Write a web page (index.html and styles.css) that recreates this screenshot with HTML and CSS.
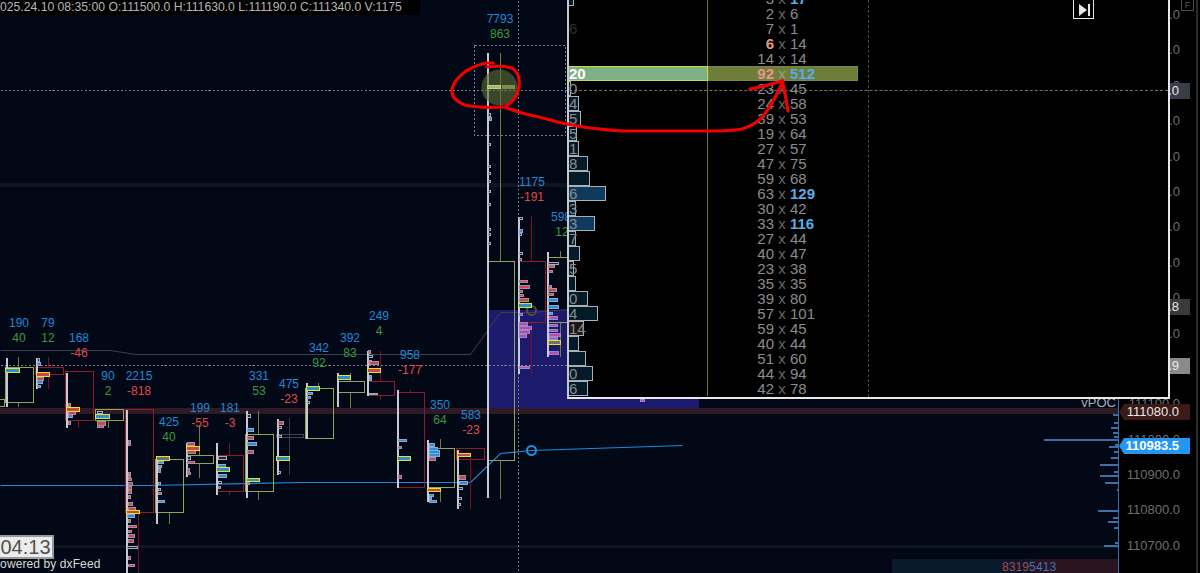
FILE: index.html
```html
<!DOCTYPE html>
<html lang="en">
<head>
<meta charset="utf-8">
<title>Footprint chart</title>
<link rel="stylesheet" href="styles.css">
</head>
<body>
<div class="stage">
  <main class="chart">
    <svg class="plot" width="1118" height="573" viewBox="0 0 1118 573">
      <rect class="band-gray" x="0" y="183" width="568" height="4"/>
      <rect class="band-gray" x="0" y="545" width="1118" height="3"/>
      <rect class="area" x="487" y="310" width="212" height="102"/>
      <rect class="band-red" x="0" y="408" width="1118" height="6"/>
      <rect class="foot-blue" x="892" y="559" width="138" height="14"/>
      <rect class="foot-red" x="1030" y="559" width="88" height="14"/>
      <g transform="translate(.5 .5)">
        <path class="dots" d="M0 90H568M0 365H568M518 0V573M474 45h91v90h-91z"/>
        <path class="vwap-gray" d="M0 350H110L135 354H470L500 312H531L568 309"/>
        <path class="vwap-blue" d="M0 485L150 485 300 482 380 482H470L500 453 531 450 682 445"/>
        <circle class="dot-gray" cx="531" cy="310" r="4.5"/>
        <circle class="dot-blue" cx="531" cy="450" r="4.5"/>
        <path class="wick-g" d="M18 356V367M18 402V406M108 420V427M169 512V523M199 424V455M199 463V477M258 410V434M258 491V499M318 382V388M350 372V381M350 392V407M440 438V448M440 487V501M500 52V261M500 460V498M560 250V257M560 322V356"/>
        <path class="wick-r" d="M48 356V367M48 374V388M78 420V427M138 512V573M229 442V455M229 491V494M380 350V381M380 395V399M410 389V392M470 459V508M531 215V261M531 322V373"/>
        <path class="wick-k" d="M289 417V474"/>
        <path class="box-k" d="M276 434h27v3h-27z"/>
        <path class="box-g" d="M5 367h28v35h-28zM95 409h28v11h-28zM155 459h28v53h-28zM186 455h27v8h-27zM245 434h28v57h-28zM305 388h28v50h-28zM337 381h27v11h-27zM427 448h27v39h-27zM487 261h27v199h-27zM547 257h21v65h-21zM-2 399h6v7h-6z"/>
        <path class="box-r" d="M35 367h28v7h-28zM65 371h28v49h-28zM125 409h28v103h-28zM216 455h27v36h-27zM367 381h27v14h-27zM397 392h27v95h-27zM456 448h28v11h-28zM518 261h27v61h-27z"/>
        <path class="spine" d="M6 357V406M36 357V388M66 372V427M126 409V573M156 456V523M186 442V476M216 442V494M246 410V497M277 418V474M306 382V438M337 372V406M367 350V395M397 389V487M427 439V501M457 449V508M487 52V497M518 216V373M547 251V356"/>
        <path class="bar-k" d="M37 358h2v3h-2zM97 411h5v2h-5zM218 456h8v3h-8zM218 481h3v2h-3zM247 414h3v3h-3zM278 426h3v2h-3zM278 435h3v2h-3zM278 471h2v2h-2zM187 456h3v3h-3zM158 482h2v2h-2zM158 488h2v2h-2zM127 546h10v2h-10zM368 355h4v2h-4zM368 360h3v2h-3zM458 487h4v2h-4zM458 497h3v2h-3zM458 503h2v2h-2zM488 113h2v3h-2zM488 143h2v2h-2zM488 165h2v2h-2zM488 172h2v2h-2zM488 180h2v2h-2zM488 190h2v2h-2zM488 203h2v2h-2zM488 228h2v2h-2zM488 233h2v2h-2zM488 242h2v2h-2zM519 217h3v2h-3zM519 233h2v2h-2zM519 252h3v2h-3zM519 258h2v2h-2zM548 262h10v2h-10zM458 475h3v2h-3zM307 401h2v2h-2z"/>
        <path class="bar-b" d="M37 362h3v3h-3zM37 380h5v3h-5zM37 385h3v2h-3zM68 414h4v3h-4zM127 514h7v3h-7zM158 461h5v2h-5zM158 465h3v2h-3zM158 468h2v2h-2zM158 500h6v2h-6zM218 464h7v3h-7zM218 474h8v3h-8zM247 428h6v3h-6zM247 442h9v3h-9zM307 392h5v2h-5zM307 396h3v2h-3zM369 375h2v2h-2zM369 378h2v2h-2zM369 393h8v1h-8zM398 439h8v2h-8zM429 443h5v3h-5zM429 447h8v3h-8zM429 450h10v3h-10zM429 453h10v3h-10zM429 494h4v2h-4zM429 497h2v2h-2zM429 500h7v2h-7zM459 481h8v3h-8zM489 117h2v3h-2zM519 229h3v3h-3zM548 298h9v3h-9zM548 305h10v3h-10zM549 312h3v2h-3z"/>
        <path class="bar-r" d="M37 377h6v3h-6zM68 403h2v3h-2zM68 411h7v3h-7zM68 421h2v3h-2zM97 421h8v4h-8zM97 425h6v2h-6zM128 440h2v2h-2zM128 443h2v2h-2zM128 472h2v2h-2zM128 475h2v2h-2zM128 478h3v2h-3zM128 482h4v3h-4zM128 486h3v3h-3zM128 490h3v3h-3zM128 495h2v3h-2zM128 502h4v3h-4zM128 507h7v3h-7zM128 519h2v3h-2zM128 525h8v2h-8zM128 530h3v2h-3zM128 534h6v3h-6zM128 539h5v3h-5zM128 556h2v3h-2zM128 564h6v2h-6zM158 470h2v2h-2zM158 492h3v2h-3zM187 442h7v3h-7zM187 450h8v3h-8zM187 461h7v2h-7zM187 468h2v3h-2zM187 472h3v2h-3zM218 486h2v2h-2zM247 436h6v3h-6zM247 450h6v3h-6zM247 482h2v2h-2zM278 421h5v3h-5zM368 350h2v3h-2zM369 361h9v3h-9zM398 446h3v2h-3zM398 475h3v3h-3zM429 457h6v3h-6zM459 475h6v4h-6zM519 290h3v2h-3zM519 294h4v2h-4zM519 298h9v3h-9zM519 285h10v3h-10zM519 280h8v2h-8zM548 265h6v2h-6zM548 270h4v2h-4zM548 285h3v2h-3zM548 288h8v3h-8zM548 293h5v2h-5z"/>
        <path class="bar-p" d="M519 313h3v2h-3zM519 322h8v3h-8zM519 326h12v3h-12zM519 330h10v3h-10zM519 334h7v3h-7zM519 366h10v2h-10zM549 316h8v3h-8zM549 324h8v2h-8zM549 329h8v2h-8zM549 333h11v3h-11zM549 337h8v2h-8zM549 351h9v3h-9zM640 399h4v2h-4z"/>
        <path class="poc-b" d="M5 368h14v4h-14zM95 414h14v4h-14zM216 467h13v4h-13zM246 478h13v3h-13zM276 456h13v4h-13zM306 386h13v4h-13zM337 375h13v4h-13zM397 456h13v4h-13zM518 303h13v4h-13z"/>
        <path class="poc-r" d="M36 372h13v4h-13zM66 407h13v4h-13zM126 510h13v3h-13zM186 446h13v4h-13zM367 368h13v4h-13zM427 488h13v3h-13zM457 453h13v3h-13z"/>
        <path class="poc-o" d="M156 456h13v4h-13zM548 340h12v4h-12z"/>
        <circle class="halo" cx="499" cy="87" r="18"/>
        <path class="poc-light" d="M487 85h13v3h-13z"/>
        <path class="poc-olive" d="M502 85h12v3h-12z"/>
        <path class="prof-axis" d="M1118 400V573"/>
        <path class="prof" d="M1112 414h6M1113 422h5M1110 427h8M1112 432h6M1113 436h5M1043 439h75M1114 444h4M1108 446h10M1113 451h5M1110 457h8M1099 464h19M1113 471h5M1099 475h19M1104 482h14M1116 489h2M1097 510h21M1112 517h6M1107 521h11M1113 527h5M1114 542h4M1103 545h15"/>
      </g>
      <g class="vol">
        <text x="19" y="327">190</text><text x="48" y="327">79</text><text x="79" y="342">168</text><text x="108" y="380">90</text><text x="139" y="380">2215</text><text x="169" y="426">425</text><text x="200" y="412">199</text><text x="230" y="412">181</text><text x="259" y="380">331</text><text x="289" y="388">475</text><text x="319" y="352">342</text><text x="350" y="342">392</text><text x="379" y="320">249</text><text x="410" y="359">958</text><text x="440" y="409">350</text><text x="471" y="419">583</text><text x="500" y="23">7793</text><text x="532" y="186">1175</text><text x="561" y="221">598</text>
      </g>
      <g class="up">
        <text x="19" y="342">40</text><text x="48" y="342">12</text><text x="108" y="395">2</text><text x="169" y="441">40</text><text x="259" y="395">53</text><text x="319" y="367">92</text><text x="350" y="357">83</text><text x="379" y="335">4</text><text x="440" y="424">64</text><text x="500" y="38">863</text><text x="562" y="236">12</text>
      </g>
      <g class="down">
        <text x="79" y="357">-46</text><text x="139" y="395">-818</text><text x="200" y="427">-55</text><text x="230" y="427">-3</text><text x="289" y="403">-23</text><text x="410" y="374">-177</text><text x="471" y="434">-23</text><text x="532" y="201">-191</text>
      </g>
      <text class="vpoc" x="1116" y="407">vPOC</text>
      <text class="foot-num" x="1002" y="571"><tspan class="foot-a">8319</tspan><tspan class="foot-b">5413</tspan></text>
    </svg>
    <header class="ohlc"><span class="ohlc-text">2025.24.10 08:35:00 O:111500.0 H:111630.0 L:111190.0 C:111340.0 V:1175</span></header>
    <div class="timer">04:13</div>
    <div class="powered">Powered by dxFeed</div>
  </main>
  <aside class="axis">
    <div class="tick">112200.0</div><div class="tick">112100.0</div><div class="tick">112000.0</div><div class="tick">111900.0</div><div class="tick">111800.0</div><div class="tick">111700.0</div><div class="tick">111600.0</div><div class="tick">111500.0</div><div class="tick">111400.0</div><div class="tick">111300.0</div><div class="tick">111200.0</div><div class="tick">111100.0</div><div class="tick">111000.0</div><div class="tick">110900.0</div><div class="tick">110800.0</div><div class="tick">110700.0</div>
    <div class="tag tag-cross">.0</div>
    <div class="tag tag-dark">.8</div>
    <div class="tag tag-mid">.9</div>
    <div class="tag tag-brown">111080.0</div>
    <div class="tag tag-blue">110983.5</div>
    <div class="fbox">F</div>
  </aside>
  <section class="dom">
    <div class="rows">
      <div class="row"><div class="hist"><span class="bar" style="width:5px"></span></div><div class="cells"><span class="l">3</span><span class="x">x</span><span class="r big">17</span></div></div>
      <div class="row"><div class="hist"></div><div class="cells"><span class="l">2</span><span class="x">x</span><span class="r">6</span></div></div>
      <div class="row"><div class="hist"><span class="faint">6</span></div><div class="cells"><span class="l">7</span><span class="x">x</span><span class="r">1</span></div></div>
      <div class="row"><div class="hist"></div><div class="cells"><span class="l hot">6</span><span class="x">x</span><span class="r">14</span></div></div>
      <div class="row"><div class="hist"></div><div class="cells"><span class="l">14</span><span class="x">x</span><span class="r">14</span></div></div>
      <div class="row poc"><div class="hist"><span class="poc-n">20</span></div><div class="cells"><span class="l hot">92</span><span class="x">x</span><span class="r big">512</span></div></div>
      <div class="row"><div class="hist"><span class="bar" style="width:2px">0</span></div><div class="cells"><span class="l">23</span><span class="x">x</span><span class="r">45</span></div></div>
      <div class="row"><div class="hist"><span class="bar" style="width:10px">4</span></div><div class="cells"><span class="l">24</span><span class="x">x</span><span class="r">58</span></div></div>
      <div class="row"><div class="hist"><span class="bar" style="width:12px">5</span></div><div class="cells"><span class="l">39</span><span class="x">x</span><span class="r">53</span></div></div>
      <div class="row"><div class="hist"><span class="bar" style="width:8px">5</span></div><div class="cells"><span class="l">19</span><span class="x">x</span><span class="r">64</span></div></div>
      <div class="row"><div class="hist"><span class="bar" style="width:10px">1</span></div><div class="cells"><span class="l">27</span><span class="x">x</span><span class="r">57</span></div></div>
      <div class="row"><div class="hist"><span class="bar" style="width:19px">8</span></div><div class="cells"><span class="l">47</span><span class="x">x</span><span class="r">75</span></div></div>
      <div class="row"><div class="hist"><span class="bar" style="width:21px"></span></div><div class="cells"><span class="l">59</span><span class="x">x</span><span class="r">68</span></div></div>
      <div class="row"><div class="hist"><span class="bar bright" style="width:37px">6</span></div><div class="cells"><span class="l">63</span><span class="x">x</span><span class="r big">129</span></div></div>
      <div class="row"><div class="hist"><span class="bar" style="width:7px">3</span></div><div class="cells"><span class="l">30</span><span class="x">x</span><span class="r">42</span></div></div>
      <div class="row"><div class="hist"><span class="bar bright" style="width:26px">3</span></div><div class="cells"><span class="l">33</span><span class="x">x</span><span class="r big">116</span></div></div>
      <div class="row"><div class="hist"><span class="bar" style="width:7px">7</span></div><div class="cells"><span class="l">27</span><span class="x">x</span><span class="r">44</span></div></div>
      <div class="row"><div class="hist"><span class="bar" style="width:11px"></span></div><div class="cells"><span class="l">40</span><span class="x">x</span><span class="r">47</span></div></div>
      <div class="row"><div class="hist"><span class="bar" style="width:5px">5</span></div><div class="cells"><span class="l">23</span><span class="x">x</span><span class="r">38</span></div></div>
      <div class="row"><div class="hist"><span class="bar" style="width:7px"></span></div><div class="cells"><span class="l">35</span><span class="x">x</span><span class="r">35</span></div></div>
      <div class="row"><div class="hist"><span class="bar" style="width:19px">0</span></div><div class="cells"><span class="l">39</span><span class="x">x</span><span class="r">80</span></div></div>
      <div class="row"><div class="hist"><span class="bar" style="width:29px">4</span></div><div class="cells"><span class="l">57</span><span class="x">x</span><span class="r">101</span></div></div>
      <div class="row"><div class="hist"><span class="bar brown" style="width:15px">14</span></div><div class="cells"><span class="l">59</span><span class="x">x</span><span class="r">45</span></div></div>
      <div class="row"><div class="hist"><span class="bar" style="width:10px"></span></div><div class="cells"><span class="l">40</span><span class="x">x</span><span class="r">44</span></div></div>
      <div class="row"><div class="hist"><span class="bar" style="width:17px"></span></div><div class="cells"><span class="l">51</span><span class="x">x</span><span class="r">60</span></div></div>
      <div class="row"><div class="hist"><span class="bar" style="width:24px">0</span></div><div class="cells"><span class="l">44</span><span class="x">x</span><span class="r">94</span></div></div>
      <div class="row"><div class="hist"><span class="bar" style="width:19px">6</span></div><div class="cells"><span class="l">42</span><span class="x">x</span><span class="r">78</span></div></div>
    </div>
    <div class="next"><svg width="19" height="19" viewBox="0 0 19 19"><path class="next-icon" d="M5 4L13 10 5 16zM14 4h2v12h-2z"/></svg></div>
  </section>
  <svg class="ink" width="1200" height="573" viewBox="0 0 1200 573">
    <path d="M493 63L487 63C480 64 473 67 466 71C458 77 452 84 452 91C452 98 457 102 465 105C473 107 490 108 503 107"/>
    <path d="M487 67C495 66 505 66 512 68C518 72 520 79 519 86C518 94 514 100 510 103C507 105 505 107 505 107C512 110 520 113 530 115C545 118 556 122 567 124C585 128 605 130 623 131C650 131 690 131 707 131C720 131 733 131 742 129C752 126 758 122 763 116C770 108 775 98 779 90C781 85 782 82 783 81"/>
    <path d="M750 89C762 87 772 84 782 81C785 90 786 100 788 111"/>
  </svg>
</div>
</body>
</html>
```
FILE: styles.css
```css
* { box-sizing: border-box; }
html, body { margin: 0; padding: 0; background: #020816; }
.stage {
  position: relative;
  display: flex;
  width: 1200px;
  height: 573px;
  overflow: hidden;
  font-family: "Liberation Sans", Arial, sans-serif;
}
.chart { position: relative; width: 1118px; height: 573px; background: #020816; flex: none; }
.plot { display: block; shape-rendering: crispEdges; }
.plot text { font-size: 12px; text-anchor: middle; }

.band-gray { fill: #10151f; }
.band-red { fill: #2e1a24; }
.area { fill: #1c1a6c; }
.foot-blue { fill: #0a1a2c; }
.foot-red { fill: #2a1420; }

.dots { fill: none; stroke: #7d8088; stroke-width: 1; stroke-dasharray: 2 2; }
.vwap-gray { fill: none; stroke: #3c404c; shape-rendering: geometricPrecision; }
.vwap-blue { fill: none; stroke: #2088dc; stroke-width: 1.2; shape-rendering: geometricPrecision; }
.dot-gray { fill: none; stroke: #4e4c40; stroke-width: 2; shape-rendering: geometricPrecision; }
.dot-blue { fill: none; stroke: #2090e0; stroke-width: 2; shape-rendering: geometricPrecision; }
.wick-g { fill: none; stroke: #6e8040; }
.wick-r { fill: none; stroke: #7e121c; }
.wick-k { fill: none; stroke: #383c44; }
.box-k { fill: none; stroke: #40444c; }
.box-g { fill: none; stroke: #8fa658; }
.box-r { fill: none; stroke: #921a26; }
.spine { fill: none; stroke: #c6cad6; stroke-width: 2; }
.bar-k { fill: #20242e; stroke: #a8acb8; }
.bar-b { fill: #2a8ee0; stroke: #8ea8c8; }
.bar-r { fill: #c84658; stroke: #a8909c; }
.bar-p { fill: #b84ca0; stroke: #9a88d0; }
.poc-b { fill: #2a8ee0; stroke: #e8e41c; }
.poc-r { fill: #c84658; stroke: #e8e41c; }
.poc-o { fill: #6a7080; stroke: #e8e41c; }
.halo { fill: #5c6c36; fill-opacity: .62; stroke: none; shape-rendering: geometricPrecision; }
.poc-light { fill: #8cb89c; stroke: #c8d850; }
.poc-olive { fill: #7e8e48; stroke: #7e8e48; }
.prof { fill: none; stroke: #3c6ea8; stroke-width: 2; }
.prof-axis { fill: none; stroke: #3c6ea8; }

.vol { fill: #1e88d8; }
.up { fill: #3c9a3c; }
.down { fill: #e04848; }
.plot .vpoc { fill: #a8acb4; font-size: 13px; text-anchor: end; }
.plot .foot-num { font-size: 12px; text-anchor: start; letter-spacing: .1px; }
.foot-a { fill: #b04a50; }
.foot-b { fill: #3e78b8; }

.ohlc {
  position: absolute;
  left: 0;
  top: 0;
  width: 420px;
  height: 15px;
  overflow: hidden;
  background: #000;
  color: #b4b4b4;
  font-size: 12.2px;
  line-height: 15px;
  white-space: nowrap;
}
.ohlc-text { display: block; margin-left: -6.8px; }
.timer {
  position: absolute;
  left: -3px;
  top: 535px;
  width: 57px;
  height: 24px;
  border: 2px solid #9a9a9a;
  background: #ececec;
  color: #505050;
  font-size: 20px;
  line-height: 20px;
  text-align: center;
}
.powered {
  position: absolute;
  left: -8px;
  top: 557px;
  color: #d8d8d8;
  font-size: 12px;
  line-height: 14px;
  letter-spacing: .1px;
  white-space: nowrap;
}

.axis {
  position: relative;
  flex: none;
  width: 82px;
  height: 573px;
  padding-top: 6px;
  background: #000;
  border-left: 1px solid #3c6ea8;
}
.axis::after {
  content: "";
  position: absolute;
  top: 0;
  bottom: 0;
  left: 77px;
  width: 2px;
  background: #2a2a2a;
}
.tick {
  height: 35.4px;
  padding-right: 20px;
  color: #6e6e6e;
  font-size: 13px;
  line-height: 18px;
  text-align: right;
  white-space: nowrap;
}
.tag {
  position: absolute;
  left: 0;
  width: 71px;
  height: 16px;
  padding-right: 11px;
  color: #e8e8e8;
  font-size: 13px;
  line-height: 16px;
  text-align: right;
  white-space: nowrap;
}
.tag-cross { top: 83px; background: #383d4a; }
.tag-dark { top: 299px; background: #3a3a3a; }
.tag-mid { top: 358px; background: #8a8a8a; }
.tag-brown {
  top: 404px;
  background: #3c1a18;
  clip-path: polygon(0 50%, 5px 0, 100% 0, 100% 100%, 5px 100%);
}
.tag-blue {
  top: 438px;
  background: #2196f3;
  color: #fff;
  font-weight: 700;
  clip-path: polygon(0 50%, 5px 0, 100% 0, 100% 100%, 5px 100%);
}
.fbox {
  position: absolute;
  left: 62px;
  top: -1px;
  width: 13px;
  height: 12px;
  border: 1px solid #4a4a50;
  color: #5a5a60;
  font-size: 9px;
  line-height: 10px;
  text-align: center;
}

.dom {
  position: absolute;
  left: 567px;
  top: 0;
  width: 603px;
  height: 399px;
  overflow: hidden;
  background: #000;
  border-left: 2px solid #c8c8c8;
  border-right: 2px solid #e8e8e8;
  border-bottom: 2px solid #e8e8e8;
  color: #8c8c8c;
  font-size: 15px;
  line-height: 15px;
}
.dom::before {
  content: "";
  position: absolute;
  left: 0;
  right: 0;
  top: 90px;
  border-top: 1px dashed #6e6e6e;
}
.dom::after {
  content: "";
  position: absolute;
  left: 299px;
  top: 0;
  bottom: 0;
  border-left: 1px dashed #484848;
}
.rows { position: relative; margin-top: -9px; }
.row { display: flex; height: 15px; }
.hist { flex: none; width: 139px; height: 15px; border-right: 1px solid #6a7a32; }
.cells {
  display: grid;
  flex: none;
  grid-template-columns: 66px 16px auto;
  width: 150px;
  height: 15px;
}
.l { text-align: right; }
.x { color: #666; text-align: center; }
.r { text-align: left; }
.big { color: #58ace8; font-weight: 700; }
.hot { color: #e8968a; font-weight: 700; }
.bar {
  display: block;
  height: 15px;
  background: #041a28;
  border: 1px solid #a8b0b8;
  border-left: 0;
  line-height: 13px;
  white-space: nowrap;
}
.bright { background: #0e3a5e; }
.brown { background: #201416; }
.faint { color: #303030; }
.poc .hist { background: #7cb086; border: 1px solid #c8d848; border-left: 0; }
.poc .cells { background: #6e7d3a; box-shadow: inset 0 0 0 1px #7a8a3c; }
.poc .x { color: #9aa088; }
.poc-n { display: block; color: #fff; font-weight: 700; line-height: 13px; }
.next {
  position: absolute;
  left: 504px;
  top: -1px;
  width: 21px;
  height: 20px;
  border: 1px solid #e8e8e8;
}
.next svg { display: block; }
.next-icon { fill: #e8e8e8; }

.ink { position: absolute; left: 0; top: 0; pointer-events: none; }
.ink path { fill: none; stroke: #f00000; stroke-width: 3.2; stroke-linecap: round; stroke-linejoin: round; }
```
